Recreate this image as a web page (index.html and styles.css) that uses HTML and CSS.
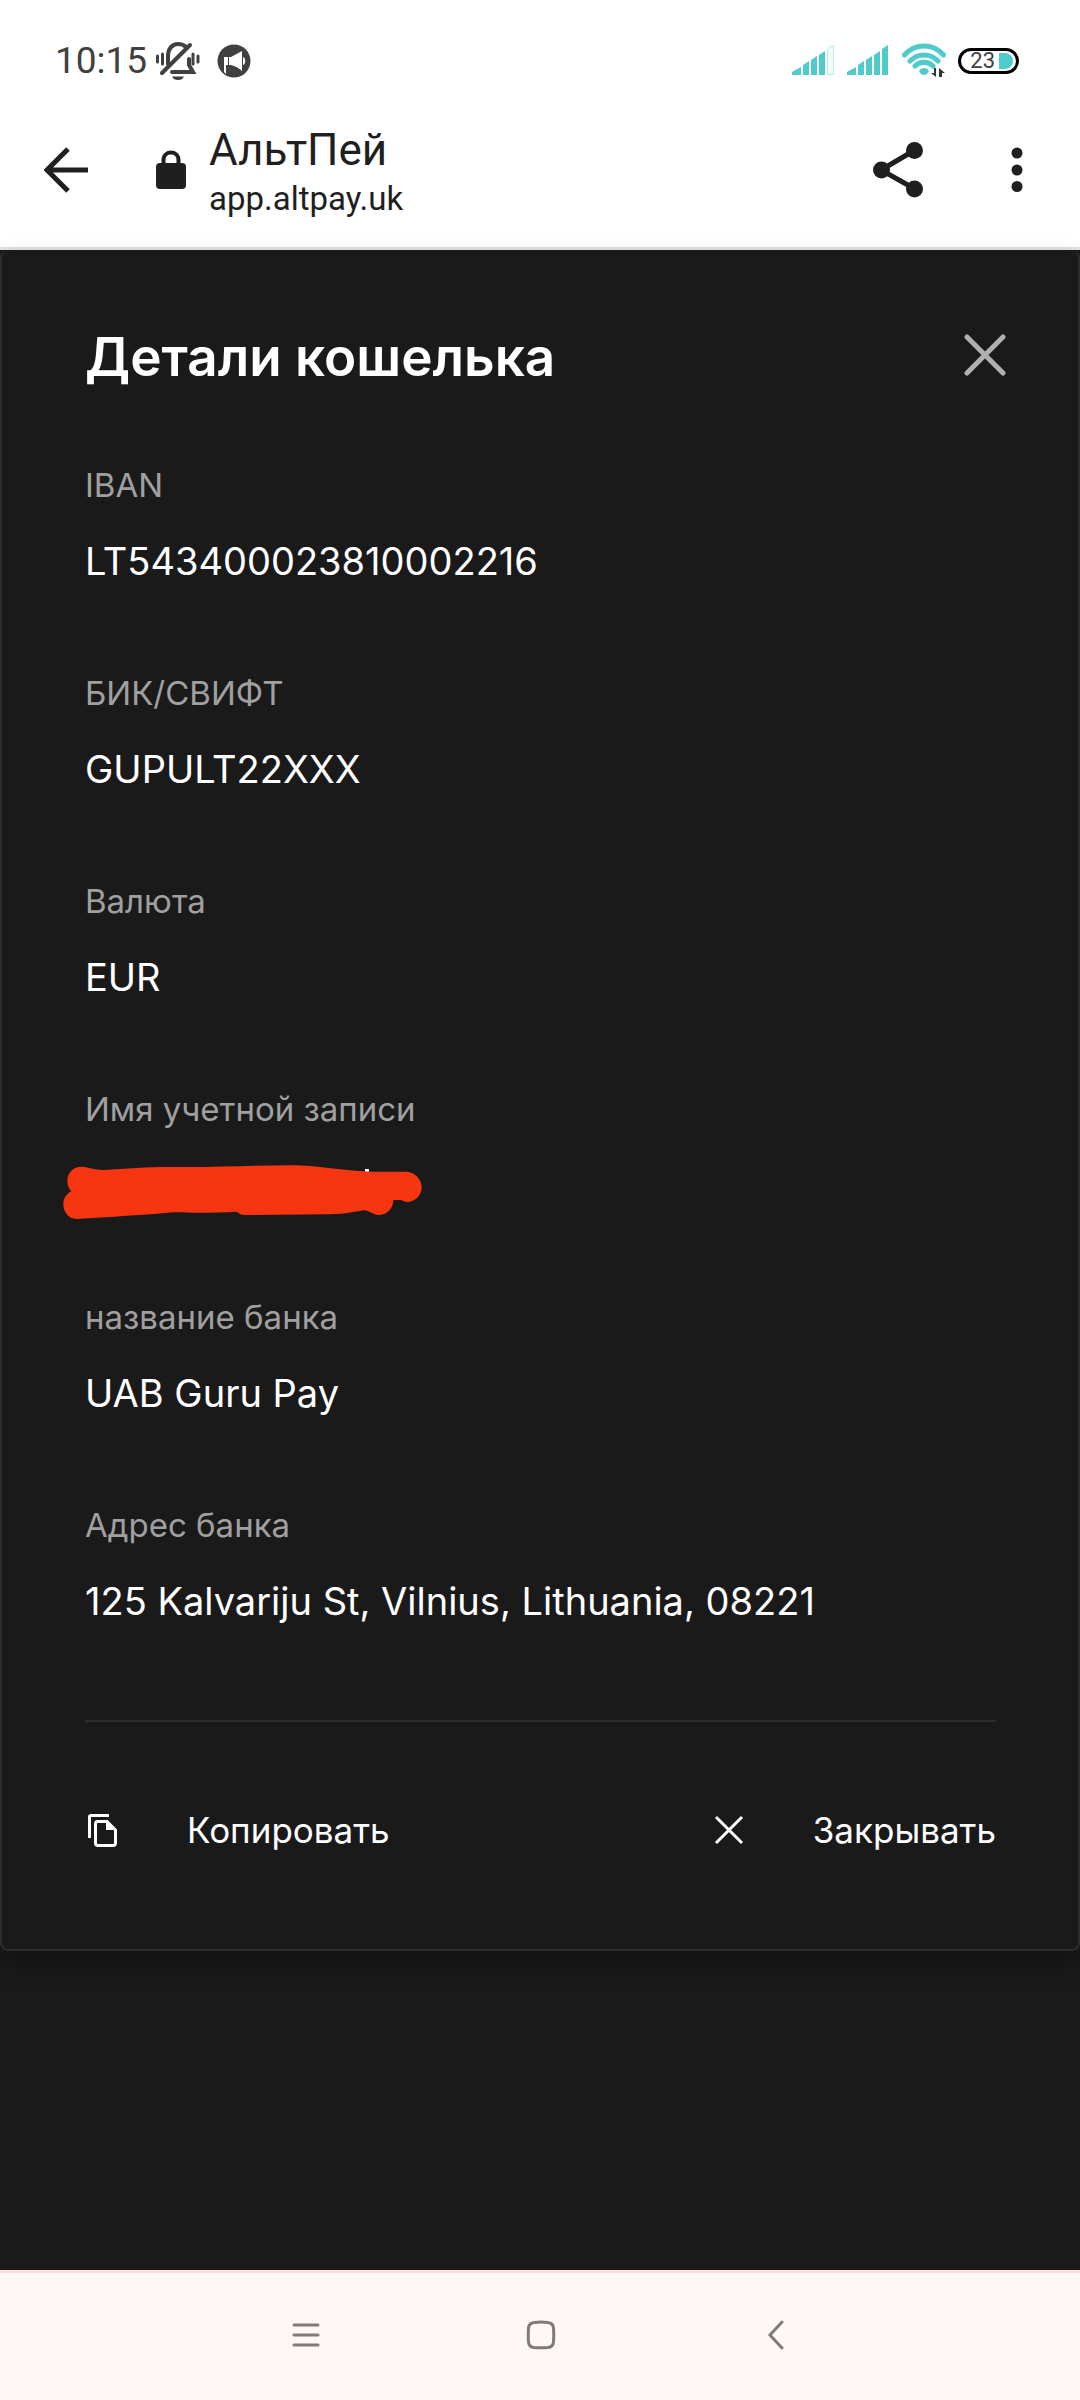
FILE: index.html
```html
<!DOCTYPE html>
<html lang="ru">
<head>
    <meta charset="UTF-8">
    <meta name="viewport" content="width=device-width, initial-scale=1.0">
    <title>АльтПей</title>
    <link rel="stylesheet" href="styles.css">
</head>
<body>
    <div class="status-bar">
        <div class="status-left">
            <span class="time">10:15</span>
            <svg class="bell" width="44" height="38" viewBox="0 0 44 38" fill="none" stroke="#404040" stroke-width="4" stroke-linecap="round">
                <path d="M12 22V14C12 7 16 2 22 2C26 2 28 3 30 5M16 30H37L33 23V17"/>
                <path d="M6 31L34 3"/>
                <path d="M1.500 14V20M6.500 12V22M37 12V22M42 14V20" stroke-width="3"/>
                <path d="M16 34.500H28C27 37 25 38 22 38S17 37 16 34.500Z" fill="#404040" stroke="none"/>
            </svg>
            <svg class="megaphone" width="34" height="34" viewBox="0 0 34 34">
                <circle cx="17" cy="17" r="16.500" fill="#404040"/>
                <path d="M7 13H14L25 7V27C22 24 18 22 14 21H9V30L7 28Z" fill="#fff"/>
                <path d="M26 13C29 14 29 20 26 21Z" fill="#fff"/>
                <path d="M11.500 13V21" stroke="#404040"/>
            </svg>
        </div>
        <div class="status-right">
            <svg width="43" height="32" viewBox="0 0 43 32" fill="#4fcbcb">
                <path d="M0 30V27L9 22V30ZM11 30V20L17 16V30ZM19 30V15L25 11V30ZM27 30V10L33 6V30Z"/>
                <path d="M35.500 29.500V5L38 1.500L41.500 .500V29.500Z" fill="#effdfc" stroke="#b5eae8"/>
            </svg>
            <svg width="43" height="32" viewBox="0 0 43 32" fill="#4fcbcb">
                <path d="M0 30V27L9 22V30ZM11 30V20L17 16V30ZM19 30V15L25 11V30ZM27 30V10L33 6V30ZM35 30V4L41 0V30Z"/>
            </svg>
            <svg class="wifi" width="44" height="36" viewBox="0 0 44 36">
                <g fill="none" stroke="#4fcbcb" stroke-width="5" stroke-linecap="round">
                    <path d="M2.500 12C13 0 31 0 41.500 12M8 18C16 10 28 10 36 18M13 23C18 18 26 18 31 23"/>
                </g>
                <path d="M17 28C19 24 25 24 27 28C26 31 23 32 22 32S18 31 17 28Z" fill="#4fcbcb"/>
                <path d="M34 25V34L29 30H32V25ZM37 34V25L43 30H40V34Z" fill="#333"/>
            </svg>
            <div class="battery"><span>23</span><i></i></div>
        </div>
    </div>

    <header class="toolbar">
        <button class="icon-btn" aria-label="Назад">
            <svg width="44" height="46" viewBox="0 0 44 46" fill="none" stroke="#1f1f1f" stroke-width="5">
                <path d="M44 23H4M24 2L3 23L24 44"/>
            </svg>
        </button>
        <svg class="lock" width="30" height="40" viewBox="0 0 30 40">
            <rect y="13" width="30" height="26" rx="4" fill="#1f1f1f"/>
            <path d="M7.500 14V10C7.500 0 22.500 0 22.500 10V14" fill="none" stroke="#1f1f1f" stroke-width="4"/>
        </svg>
        <div class="site">
            <div class="site-name">АльтПей</div>
            <div class="site-url">app.altpay.uk</div>
        </div>
        <button class="icon-btn" aria-label="Поделиться">
            <svg width="50" height="56" viewBox="0 0 50 56" fill="#1f1f1f">
                <path d="M42 8L8 28L42 47" fill="none" stroke="#1f1f1f" stroke-width="5"/>
                <circle cx="8.500" cy="28" r="8.500"/>
                <circle cx="41.500" cy="8.500" r="8.500"/>
                <circle cx="41.500" cy="47" r="8.500"/>
            </svg>
        </button>
        <button class="icon-btn menu-btn" aria-label="Меню">
            <svg width="12" height="46" viewBox="0 0 12 46" fill="#1f1f1f">
                <circle cx="6" cy="6" r="5.500"/>
                <circle cx="6" cy="23" r="5.500"/>
                <circle cx="6" cy="39.500" r="5.500"/>
            </svg>
        </button>
    </header>

    <main class="page">
        <section class="card">
            <div class="card-header">
                <h1>Детали кошелька</h1>
                <button class="icon-btn" aria-label="Закрыть">
                    <svg width="42" height="42" viewBox="0 0 42 42" stroke="#b0b0b0" stroke-width="5" stroke-linecap="round">
                        <path d="M3 3L39 39M39 3L3 39"/>
                    </svg>
                </button>
            </div>

            <dl class="details">
                <div class="item">
                    <dt>IBAN</dt>
                    <dd>LT543400023810002216</dd>
                </div>
                <div class="item">
                    <dt>БИК/СВИФТ</dt>
                    <dd>GUPULT22XXX</dd>
                </div>
                <div class="item">
                    <dt>Валюта</dt>
                    <dd>EUR</dd>
                </div>
                <div class="item">
                    <dt>Имя учетной записи</dt>
                    <dd class="hidden-name">
                        <svg width="364" height="60" viewBox="0 0 1092 180">
                            <path d="M915 24H927V34H915Z" fill="#fff"/>
                            <path d="M65 17C80 18 105 26 130 27C200 23 260 18 330 18C460 20 580 13 690 13C780 13 830 28 930 32H1035C1065 32 1085 55 1085 79C1085 108 1060 123 1042 123C1033 123 1028 117 1020 117H1000C1000 145 978 162 956 162C940 162 928 150 915 148C890 150 855 161 800 160L555 162C545 162 537 158 530 152C465 156 410 156 340 154C250 162 150 168 50 174C25 174 10 152 10 130C10 112 20 98 34 91C26 82 22 72 22 60C22 35 40 17 65 17Z" fill="#f73611"/>
                        </svg>
                    </dd>
                </div>
                <div class="item">
                    <dt>название банка</dt>
                    <dd>UAB Guru Pay</dd>
                </div>
                <div class="item">
                    <dt>Адрес банка</dt>
                    <dd>125 Kalvariju St, Vilnius, Lithuania, 08221</dd>
                </div>
            </dl>

            <div class="actions">
                <button class="action">
                    <svg width="36" height="36" viewBox="0 0 36 36" fill="none" stroke="#fff" stroke-width="3">
                        <path d="M4.500 26V5Q4.500 3.500 6 3.500H24"/>
                        <path d="M12.500 9.500H22L30.500 18V31Q30.500 33.500 28 33.500H13Q10.500 33.500 10.500 31V12Q10.500 9.500 12.500 9.500Z"/>
                        <path d="M21 9L31 18H21Z" fill="#fff" stroke="none"/>
                    </svg>
                    Копировать
                </button>
                <button class="action">
                    <svg width="36" height="36" viewBox="0 0 36 36" stroke="#fff" stroke-width="3">
                        <path d="M5 5L31 31M31 5L5 31"/>
                    </svg>
                    Закрывать
                </button>
            </div>
        </section>
    </main>

    <nav class="nav-bar">
        <button class="icon-btn" aria-label="Недавние">
            <svg width="30" height="30" viewBox="0 0 30 30" stroke="#807a7a" stroke-width="3" stroke-linecap="round">
                <path d="M3 5H27M3 15H27M3 25H27"/>
            </svg>
        </button>
        <button class="icon-btn" aria-label="Домой">
            <svg width="30" height="30" viewBox="0 0 30 30" fill="none" stroke="#807a7a" stroke-width="3">
                <path d="M8 2.500Q15 1.500 22 2.500Q27 3 27.500 8Q28 15 27.500 22Q27 27 22 27.500Q15 28 8 27.500Q3 27 2.500 22Q2 15 2.500 8Q3 3 8 2.500Z"/>
            </svg>
        </button>
        <button class="icon-btn" aria-label="Назад">
            <svg width="30" height="30" viewBox="0 0 30 30" fill="none" stroke="#807a7a" stroke-width="3" stroke-linecap="round">
                <path d="M21 2L9 15L21 28"/>
            </svg>
        </button>
    </nav>
</body>
</html>
```
FILE: styles.css
```css
* {
    box-sizing: border-box;
}
body {
    margin: 0;
    min-height: 100vh;
    display: flex;
    flex-direction: column;
    background: #1a1a1b;
    font-family: Inter, "Noto Sans", sans-serif;
}
svg {
    display: block;
    flex: none;
}
button {
    font: inherit;
    color: inherit;
    border: none;
    background: none;
    padding: 0;
    cursor: pointer;
}

/* status bar */
.status-bar {
    display: flex;
    justify-content: space-between;
    align-items: center;
    height: 92px;
    padding: 30px 61px 0 55px;
    background: #fff;
    font-family: Roboto, sans-serif;
    color: #404040;
}
.status-left,
.status-right {
    display: flex;
    align-items: center;
}
.status-left {
    gap: 9px;
}
.time {
    font-size: 37px;
    line-height: 44px;
}
.megaphone {
    margin-left: 8px;
}
.status-right {
    gap: 12px;
}
.battery {
    display: flex;
    align-items: center;
    justify-content: flex-end;
    gap: 4px;
    width: 61px;
    height: 26px;
    padding-right: 3px;
    border: 3px solid #000;
    border-radius: 13px;
    font-size: 22px;
    line-height: 22px;
}
.battery i {
    width: 14px;
    height: 16px;
    background: #4fcbcb;
    border-radius: 0 8px 8px 0;
}

/* browser toolbar */
.toolbar {
    display: flex;
    align-items: center;
    height: 158px;
    padding: 0 57px 0 44px;
    background: #fff;
    border-bottom: 3px solid #e3e3e3;
    font-family: Roboto, sans-serif;
    color: #1f1f1f;
}
.lock {
    margin: 0 23px 0 68px;
}
.site {
    flex: 1;
    padding-top: 6px;
}
.site-name {
    font-size: 44px;
    line-height: 52px;
}
.site-url {
    font-size: 33px;
    line-height: 46px;
}
.menu-btn {
    margin-left: 88px;
}

/* wallet details */
.page {
    flex: 1;
}
.card {
    padding: 75px 82px 91px 83px;
    border: 2px solid #2d2d2f;
    border-top: none;
    border-radius: 8px;
    box-shadow: 0 12px 24px rgba(0, 0, 0, 0.3);
    color: #fff;
}
.card-header {
    display: flex;
    justify-content: space-between;
    margin-right: -10px;
}
.card-header .icon-btn {
    height: 60px;
}
h1 {
    margin: 0;
    font-size: 53px;
    line-height: 64px;
    font-weight: 600;
}
.details {
    display: flex;
    flex-direction: column;
    gap: 88px;
    margin: 76px 0 95px;
}
dt {
    margin-bottom: 32px;
    font-size: 33px;
    line-height: 40px;
    color: #a0a0a0;
}
dd {
    margin: 0;
    min-height: 48px;
    font-size: 38px;
    line-height: 48px;
}
.hidden-name {
    position: relative;
}
.hidden-name svg {
    position: absolute;
    left: -25px;
    top: 0;
}
.actions {
    display: flex;
    justify-content: space-between;
    padding-top: 80px;
    border-top: 2px solid #2d2d2f;
}
.action {
    display: flex;
    align-items: center;
    gap: 66px;
    font-size: 35px;
    line-height: 56px;
}

/* system navigation */
.nav-bar {
    display: flex;
    justify-content: center;
    align-items: center;
    gap: 205px;
    height: 130px;
    padding: 0 0 4px 2px;
    background: #fff7f5;
    border-top: 3px solid #fbe0e0;
}
```
